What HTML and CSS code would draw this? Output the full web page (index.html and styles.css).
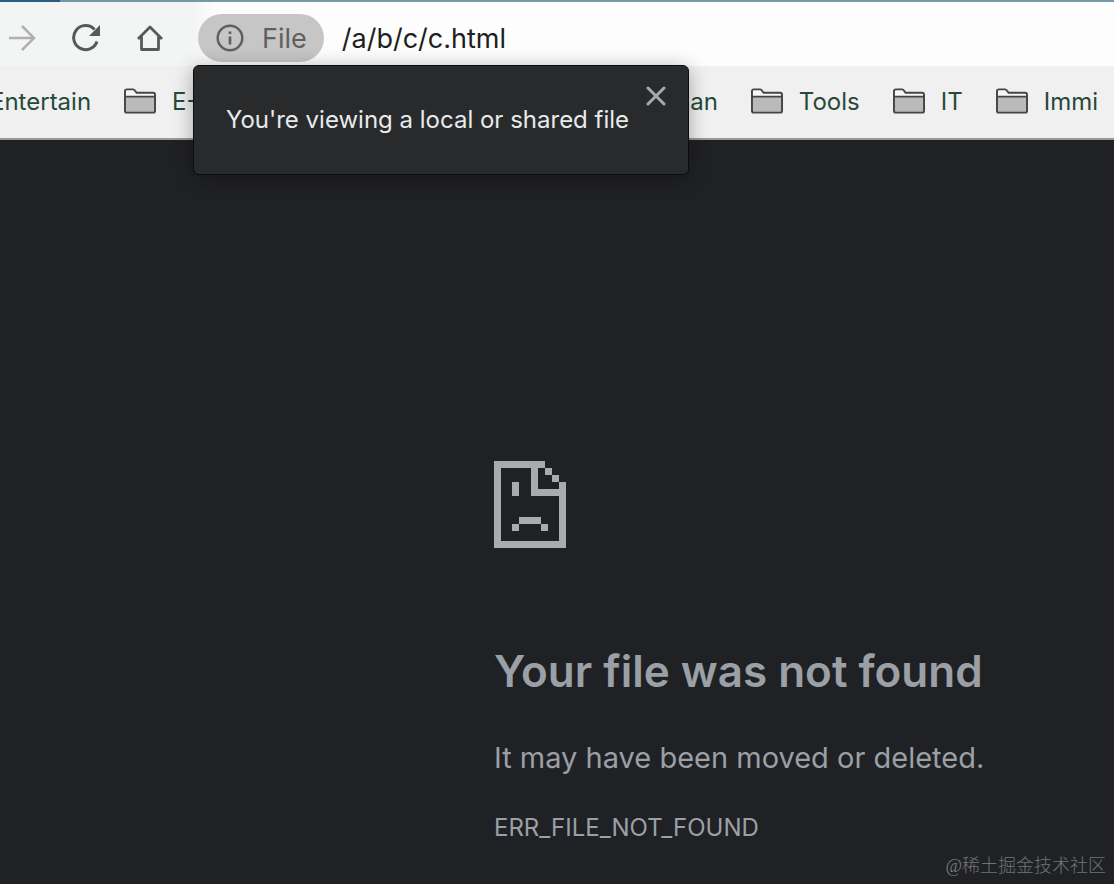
FILE: index.html
```html
<!DOCTYPE html>
<html lang="en">
<head>
<meta charset="utf-8">
<title>/a/b/c/c.html</title>
<link rel="stylesheet" href="styles.css">
</head>
<body>
<svg class="defs" aria-hidden="true">
  <symbol id="folder" viewBox="0 0 33 26">
    <path d="M1 4Q1 1 3 1H10L13.500 4.500H30Q32 4.500 32 6.500V23Q32 25 30 25H3Q1 25 1 23Z" fill="#f7f7f7"/>
    <path d="M1 8.500H32V23Q32 25 30 25H3Q1 25 1 23Z" fill="#bababa"/>
    <path d="M1 8.500H32M1 3Q1 1 3 1H9.500Q10.500 1 11.500 2.500L13 4.500H30Q32 4.500 32 6.500V23Q32 25 30 25H3Q1 25 1 23Z" fill="none" stroke="#454545" stroke-width="2"/>
  </symbol>
</svg>
<header class="browser">
  <div class="tabstrip"><div class="tab"></div></div>
  <div class="toolbar">
    <nav class="controls">
      <button class="control faded" aria-label="Forward"><svg width="28" height="28" viewBox="0 0 28 28"><path d="M1 14H26M14 2L26 14L14 26" fill="none" stroke="currentColor" stroke-width="2.500"/></svg></button>
      <button class="control" aria-label="Reload"><svg width="28" height="28" viewBox="0 0 28 28"><path d="M25 17.500A12 12 0 1 1 22.500 5.500" fill="none" stroke="currentColor" stroke-width="3"/><path d="M28 1V12H17Z" fill="currentColor"/></svg></button>
      <button class="control" aria-label="Home"><svg width="28" height="28" viewBox="0 0 28 28"><path d="M2 15L14 3L26 15M5.500 12.500V25.500H22.500V12.500" fill="none" stroke="currentColor" stroke-width="2.800" stroke-linejoin="round"/></svg></button>
    </nav>
    <div class="address">
      <button class="chip"><svg width="28" height="28" viewBox="0 0 28 28"><circle cx="14" cy="14" r="12.300" fill="none" stroke="currentColor" stroke-width="2.500"/><path d="M14 12.500V20.500M14 7.500V10" stroke="currentColor" stroke-width="2.700"/></svg>File</button>
      <input class="url" aria-label="Address" value="/a/b/c/c.html">
    </div>
  </div>
  <nav class="bookmarks">
    <div class="group leading">
      <a class="bookmark" href="#">Entertain</a>
      <a class="bookmark" href="#"><svg width="32" height="26"><use href="#folder"/></svg>E-</a>
    </div>
    <div class="group">
      <a class="bookmark" href="#">man</a>
      <a class="bookmark" href="#"><svg width="32" height="26"><use href="#folder"/></svg>Tools</a>
      <a class="bookmark" href="#"><svg width="32" height="26"><use href="#folder"/></svg>IT</a>
      <a class="bookmark" href="#"><svg width="32" height="26"><use href="#folder"/></svg>Immi</a>
    </div>
  </nav>
  <div class="popup" role="dialog" aria-label="Site information">
    <p class="message">You're viewing a local or shared file</p>
    <button class="close" aria-label="Close"><svg width="20" height="20" viewBox="0 0 20 20"><path d="M2 2L18 18M18 2L2 18" stroke="currentColor" stroke-width="3" stroke-linecap="round"/></svg></button>
  </div>
</header>
<main class="page">
  <svg class="sad" width="72" height="87" viewBox="0 0 72 87" shape-rendering="crispEdges" aria-hidden="true">
    <path fill="#a9abad" d="M0 0H51V7H44V28H65V21H72V87H0ZM7 7V80H65V35H37V7ZM51 7H58V14H51ZM58 14H65V21H58ZM18 21H25V35H18ZM25 56H47V63H25ZM18 63H25V70H18ZM47 63H54V70H47Z"/>
  </svg>
  <h1 class="title">Your file was not found</h1>
  <p class="detail">It may have been moved or deleted.</p>
  <p class="code">ERR_FILE_NOT_FOUND</p>
</main>
<footer class="watermark">@稀土掘金技术社区</footer>
</body>
</html>
```
FILE: styles.css
```css
* { box-sizing: border-box; }
body {
  margin: 0;
  min-height: 100vh;
  background: #202124;
  color: #9aa0a6;
  font-family: Inter, "Liberation Sans", sans-serif;
  overflow: hidden;
}
button, input { font: inherit; border: 0; padding: 0; background: none; color: inherit; }
button svg, a svg { display: block; flex: none; }
.defs { position: absolute; width: 0; height: 0; }
.browser { position: relative; }
.tabstrip { height: 2px; background: #7796aa; }
.tab { width: 60px; height: 2px; background: #2a5c80; }
.toolbar { display: flex; height: 64px; background: #f3f4f4; }
.controls { display: flex; align-items: center; gap: 36px; padding: 8px 28px 0 8px; }
.control { color: #555a58; }
.faded { color: #b0b0b0; }
.address {
  flex: 1;
  display: flex;
  align-items: center;
  gap: 18px;
  padding: 8px 0 0 6px;
  background: linear-gradient(90deg, #f3f4f4, #fdfdfd 24px);
}
.chip {
  display: flex;
  align-items: center;
  gap: 18px;
  height: 48px;
  padding: 0 17px 0 18px;
  border-radius: 24px;
  background: #c6c6c6;
  color: #606060;
  font-size: 27px;
}
.url { flex: 1; min-width: 0; height: 48px; color: #202020; font-size: 27px; outline: 0; }
.bookmarks {
  display: flex;
  justify-content: space-between;
  height: 74px;
  padding: 0 16px 2px 0;
  border-bottom: 2px solid #989898;
  background: #f0f0f0;
  overflow: hidden;
}
.group { display: flex; align-items: center; gap: 33px; }
.leading { margin-left: -10px; }
.bookmark {
  display: flex;
  align-items: center;
  gap: 16px;
  color: #26493c;
  font-size: 24px;
  text-decoration: none;
}
.popup {
  position: absolute;
  top: 65px;
  left: 193px;
  display: flex;
  align-items: flex-start;
  gap: 22px;
  width: 496px;
  height: 110px;
  padding: 20px 22px 0 32px;
  border: 1px solid #0c0c0d;
  border-radius: 6px;
  background: #292a2c;
  box-shadow: 0 3px 20px rgb(0 0 0 / 32%);
  color: #e8eaed;
}
.message { flex: 1; min-width: 0; margin: 18px 0 0; font-size: 24px; line-height: 32px; white-space: nowrap; }
.close { color: #a8abad; }
.page { padding: 321px 24px 0 494px; }
.sad { display: block; }
.title { margin: 95px 0 0; font-size: 44px; line-height: 56px; font-weight: 600; white-space: nowrap; }
.detail { margin: 39px 0 0; font-size: 29px; line-height: 40px; white-space: nowrap; }
.code { margin: 34px 0 0; font-size: 24px; line-height: 32px; }
.watermark {
  position: absolute;
  right: 8px;
  bottom: 6px;
  color: #737476;
  font: 300 18px/24px "Liberation Serif", "Noto Sans CJK SC", serif;
}
```
